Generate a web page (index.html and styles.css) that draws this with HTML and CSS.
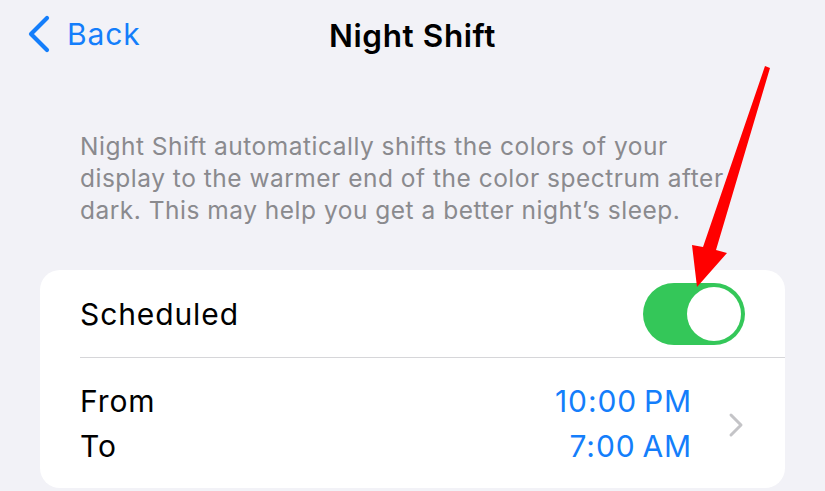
FILE: index.html
```html
<!DOCTYPE html>
<html lang="en">
  <head>
    <meta charset="utf-8" />
    <title>Night Shift</title>
    <link rel="stylesheet" href="styles.css">
  </head>
  <body>
    <div class="nav">
      <a class="back">
        <svg class="back-icon" width="24" height="38" viewBox="0 0 24 38">
          <path d="M20 3 L4 19 L20 35" fill="none" stroke="#147efb" stroke-width="4.2" stroke-linecap="round" stroke-linejoin="round" />
        </svg>
        <span>Back</span>
      </a>
      <div class="title">Night Shift</div>
      <div></div>
    </div>

    <p class="note">
      Night Shift automatically shifts the colors of your display to the warmer end of the color spectrum after dark. This may help you get a better night’s sleep.
    </p>

    <div class="card">
      <div class="row row-switch">
        <span class="label">Scheduled</span>
        <div class="switch"><div class="knob"></div></div>
      </div>
      <div class="row row-times">
        <div class="labels">
          <span>From</span>
          <span>To</span>
        </div>
        <div class="times">
          <span>10:00 PM</span>
          <span>7:00 AM</span>
        </div>
        <svg class="chevron" width="16" height="26" viewBox="0 0 16 26">
          <path d="M3 3 L13 13 L3 23" fill="none" stroke="#c4c4c7" stroke-width="3" stroke-linecap="round" stroke-linejoin="round" />
        </svg>
      </div>
    </div>

    <!-- annotation arrow pointing at the switch -->
    <svg class="arrow" width="825" height="491" viewBox="0 0 825 491">
      <polygon points="765,66 770,68 716,250 727,253 697,287 692,245 703,247" fill="#ff0000" />
    </svg>
  </body>
</html>
```

FILE: styles.css
```css
body {
  margin: 0;
  background-color: #f2f2f7;
  font-family: Inter, "Noto Sans", sans-serif;
  color: #000;
  width: 825px;
  height: 491px;
  overflow: hidden;
  position: relative;
}

.nav {
  display: grid;
  grid-template-columns: 1fr auto 1fr;
  align-items: center;
  height: 68px;
  padding-left: 27px;
  padding-right: 27px;
}

.back {
  display: flex;
  align-items: center;
  gap: 16px;
  color: #147efb;
  font-size: 30px;
  letter-spacing: 0.9px;
}

.back-icon {
  margin-top: -1px;
}

.title {
  font-size: 31.5px;
  font-weight: 600;
  letter-spacing: 0.6px;
  padding-top: 2px;
}

.note {
  margin: 62px 0 0 0;
  padding: 0 80px 0 80px;
  font-size: 24.5px;
  letter-spacing: 0.5px;
  line-height: 32px;
  color: #8a8a8e;
}

.card {
  margin: 44px 40px 0 40px;
  background-color: #ffffff;
  border-radius: 20px;
  overflow: hidden;
}

.row {
  display: flex;
  align-items: center;
  margin-left: 40px;
  padding-right: 40px;
}

.row-switch {
  height: 87px;
  border-bottom: 1.5px solid #d6d6d9;
  justify-content: space-between;
}

.label {
  font-size: 30px;
  letter-spacing: 0.9px;
}

.switch {
  width: 102px;
  height: 62px;
  border-radius: 31px;
  background-color: #34c759;
  display: flex;
  align-items: center;
  justify-content: flex-end;
  padding-right: 4px;
  box-sizing: border-box;
}

.knob {
  width: 54px;
  height: 54px;
  border-radius: 50%;
  background-color: #ffffff;
}

.row-times {
  height: 130px;
  font-size: 30px;
  letter-spacing: 0.9px;
}

.labels,
.times {
  display: flex;
  flex-direction: column;
  line-height: 45px;
}

.labels {
  flex: 1;
  padding-top: 2px;
}

.times {
  color: #147efb;
  align-items: flex-end;
  word-spacing: -2.5px;
  padding-top: 2px;
}

.chevron {
  margin-left: 36px;
  margin-right: 1px;
  margin-top: 4px;
}

.arrow {
  position: absolute;
  left: 0;
  top: 0;
  pointer-events: none;
}
```
